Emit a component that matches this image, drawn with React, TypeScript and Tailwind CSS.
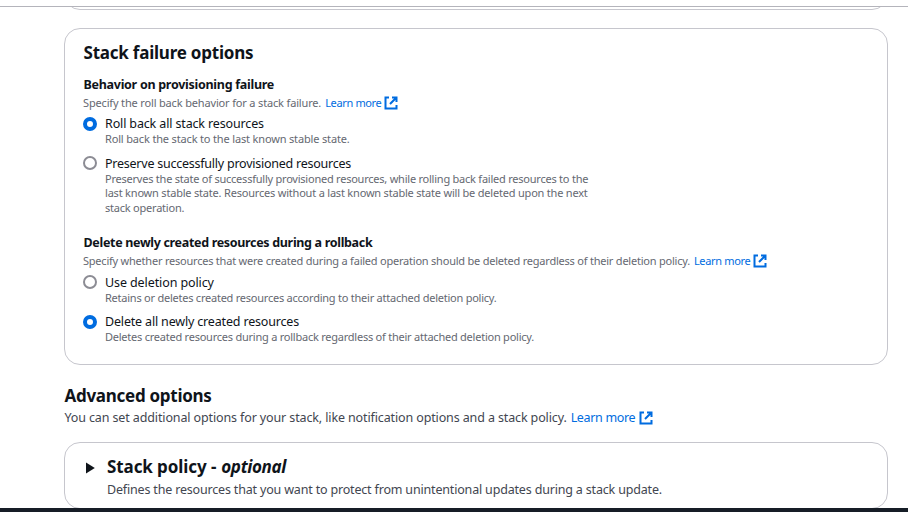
import type { ReactNode } from "react";

function ExternalIcon() {
  return (
    <svg width="14" height="14" viewBox="0 0 14 14" fill="none" stroke="#006ce0" strokeWidth="2" className="shrink-0">
      <path d="M5 1.5H1.5v11h11V9" />
      <path d="M8 1.5h4.5V6M12.2 1.8 6 8" />
    </svg>
  );
}

function LearnMore({ className }: { className: string }) {
  return (
    <a href="#" className="flex items-center text-[#006ce0]">
      <span className={className}>Learn more</span>
      <ExternalIcon />
    </a>
  );
}

function Radio({ checked }: { checked?: boolean }) {
  return (
    <span
      className={
        checked
          ? "mt-[1px] size-[14px] shrink-0 rounded-full border-[4px] border-[#006ce0] bg-white"
          : "mt-[0.4px] size-[14px] shrink-0 rounded-full border-2 border-[#8c8c94] bg-white"
      }
    />
  );
}

function Option({ checked, label, children }: { checked?: boolean; label: ReactNode; children: ReactNode }) {
  return (
    <label className="flex gap-[8px]">
      <Radio checked={checked} />
      <span className="flex flex-col">
        <span className="flex h-4 items-center pt-[1px] text-[12.5px]">{label}</span>
        <span className="flex flex-col text-[11px] leading-[14.5px] text-[#656871]">{children}</span>
      </span>
    </label>
  );
}

export default function App() {
  return (
    <div className="flex h-[512px] w-[908px] flex-col overflow-hidden bg-white font-['Noto_Sans',sans-serif] whitespace-nowrap text-[#0f141a]">
      <div className="h-[7px] shrink-0 border-b border-[#b4b4bb]" />
      <div className="flex h-[501px] shrink-0 flex-col overflow-hidden pr-[20px] pl-[64px]">
        <div className="flex h-[3px] shrink-0 flex-col justify-end overflow-hidden">
          <div className="h-10 shrink-0 rounded-2xl border border-[#c6c6cd]" />
        </div>

        <section className="mt-[18px] flex h-[337px] shrink-0 flex-col rounded-2xl border border-[#c6c6cd] pt-[13px] pl-[18px]">
          <h2 className="flex h-[22px] items-center pl-[0.5px] text-[17px] font-bold"><span className="tracking-[-0.22px]">Stack failure options</span></h2>
          <h3 className="mt-[13px] flex h-4 items-center pl-[0.5px] text-[12.5px] font-bold"><span className="tracking-[-0.28px]">Behavior on provisioning failure</span></h3>
          <div className="mt-[3px] mb-[6px] flex h-[14px] items-center gap-1 text-[11px] text-[#656871]">
            <span className="tracking-[-0.16px]">Specify the roll back behavior for a stack failure.</span>
            <LearnMore className="mr-[3px] tracking-[-0.35px]" />
          </div>
          <Option checked label={<span className="tracking-[-0.14px]">Roll back all stack resources</span>}>
            <span className="tracking-[-0.16px]">Roll back the stack to the last known stable state.</span>
          </Option>
          <div className="h-[9px]" />
          <Option label={<span className="tracking-[-0.24px]">Preserve successfully provisioned resources</span>}>
            <span className="tracking-[-0.23px]">Preserves the state of successfully provisioned resources, while rolling back failed resources to the</span>
            <span className="tracking-[-0.2px]">last known stable state. Resources without a last known stable state will be deleted upon the next</span>
            <span className="tracking-[-0.22px]">stack operation.</span>
          </Option>
          <h3 className="mt-[20px] flex h-4 items-center pl-[0.5px] text-[12.5px] font-bold"><span className="tracking-[-0.32px]">Delete newly created resources during a rollback</span></h3>
          <div className="mt-[3px] mb-[6.5px] flex h-[14px] items-center gap-1 text-[11px] text-[#656871]">
            <span className="tracking-[-0.22px]">Specify whether resources that were created during a failed operation should be deleted regardless of their deletion policy.</span>
            <LearnMore className="mr-[3px] tracking-[-0.35px]" />
          </div>
          <Option label={<span className="tracking-[-0.1px]">Use deletion policy</span>}>
            <span className="tracking-[-0.235px]">Retains or deletes created resources according to their attached deletion policy.</span>
          </Option>
          <div className="h-[8.5px]" />
          <Option checked label={<span className="tracking-[-0.17px]">Delete all newly created resources</span>}>
            <span className="tracking-[-0.235px]">Deletes created resources during a rollback regardless of their attached deletion policy.</span>
          </Option>
        </section>

        <h2 className="mt-[20px] flex h-[22px] shrink-0 items-center pl-[0.5px] text-[17px] font-bold"><span className="tracking-[-0.28px]">Advanced options</span></h2>
        <div className="mt-[2px] flex h-[18px] shrink-0 items-center gap-1 pl-[0.5px] text-[12.5px] text-[#424650]">
          <span className="tracking-[-0.125px]">You can set additional options for your stack, like notification options and a stack policy.</span>
          <LearnMore className="mr-[4px] tracking-[-0.33px]" />
        </div>

        <section className="mt-[15px] flex h-[67px] shrink-0 rounded-2xl border border-[#c6c6cd] pt-[13px] pl-[21px]">
          <svg width="10" height="12" viewBox="0 0 10 12" className="mt-[6px] mr-[11px] shrink-0 fill-[#0f141a]">
            <path d="M0 0.6 8.8 6 0 11.4Z" />
          </svg>
          <div className="flex flex-col">
            <h2 className="flex h-[22px] items-center gap-[5px] text-[17px] font-bold">
              <span className="tracking-[-0.09px]">Stack policy -</span>
              <i className="tracking-[-0.35px]">optional</i>
            </h2>
            <p className="mt-[3px] flex h-[18px] items-center text-[12.5px] text-[#424650]"><span className="tracking-[-0.175px]">Defines the resources that you want to protect from unintentional updates during a stack update.</span></p>
          </div>
        </section>
      </div>
      <div className="h-[4px] shrink-0 bg-[#161d26]" />
    </div>
  );
}
